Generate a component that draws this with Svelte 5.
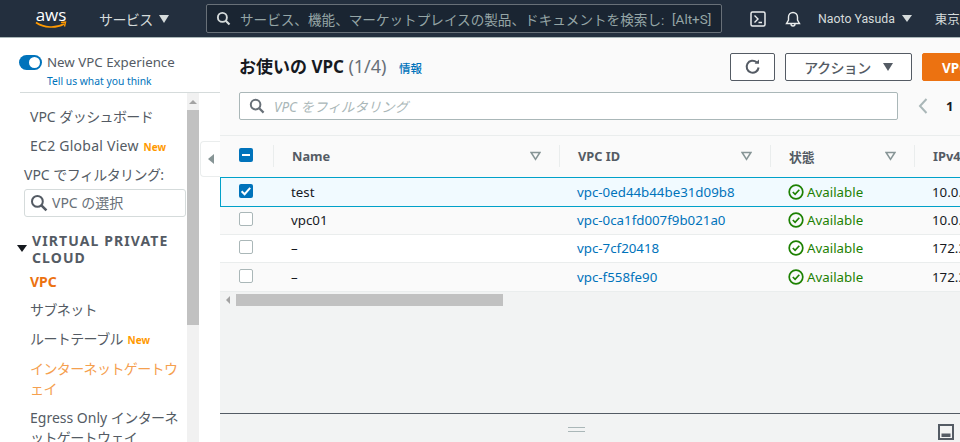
<script>
  const rows = [
    { name: "test", id: "vpc-0ed44b44be31d09b8", cidr: "10.0.0.0/16", selected: true },
    { name: "vpc01", id: "vpc-0ca1fd007f9b021a0", cidr: "10.0.0.0/16", shade: true },
    { name: "–", id: "vpc-7cf20418", cidr: "172.31.0.0/16" },
    { name: "–", id: "vpc-f558fe90", cidr: "172.31.0.0/16", shade: true }
  ];
  const columns = ["Name", "VPC ID", "状態", "IPv4 CIDR"];
</script>

<div class="app">
  <header class="topbar">
    <div class="logo">
      <span class="logo-text">aws</span>
      <svg class="smile" viewBox="0 0 32 9" width="32" height="9">
        <path d="M1 1.5C9 7 21 7.5 29 3" fill="none" stroke="#f90" stroke-width="1.6" />
        <path d="M26 1.5l4.5-.5-1 4.5" fill="none" stroke="#f90" stroke-width="1.4" />
      </svg>
    </div>
    <div class="services"><span class="ja">サービス</span><span class="caret light"></span></div>
    <div class="global-search">
      <svg viewBox="0 0 16 16" width="15" height="15">
        <circle cx="6.8" cy="6.8" r="4.8" fill="none" stroke="#d5dbdb" stroke-width="2" />
        <path d="M10.4 10.4l4 4" stroke="#d5dbdb" stroke-width="2.2" />
      </svg>
      <span class="search-text">サービス、機能、マーケットプレイスの製品、ドキュメントを検索し:</span>
      <span class="shortcut">[Alt+S]</span>
    </div>
    <svg class="cloudshell" viewBox="0 0 16 16" width="16" height="16">
      <rect x="1" y="1" width="14" height="14" rx="1.5" fill="none" stroke="#eaeded" stroke-width="1.5" />
      <path d="M4.5 4.5l3.5 3.5-3.5 3.5M8.5 11.5h3.5" fill="none" stroke="#eaeded" stroke-width="1.4" />
    </svg>
    <svg class="bell" viewBox="0 0 16 16" width="16" height="16">
      <path d="M1.5 12.5h13L12.5 9V6a4.5 4.5 0 0 0-9 0v3zM6 13a2 2 0 0 0 4 0" fill="none" stroke="#eaeded" stroke-width="1.4" />
    </svg>
    <div class="user">Naoto Yasuda<span class="caret light"></span></div>
    <div class="region">東京</div>
  </header>

  <div class="body">
    <aside class="side">
      <div class="experience">
        <div class="toggle-row">
          <span class="toggle"><span class="knob"></span></span>
          <span>New VPC Experience</span>
        </div>
        <a class="feedback">Tell us what you think</a>
      </div>

      <div class="side-lower">
        <nav class="nav">
          <div class="nav-item dash">VPC <span class="ja">ダッシュボード</span></div>
          <div class="nav-item en">EC2 Global View <span class="new">New</span></div>
          <div class="filter-label">VPC <span class="ja">でフィルタリング:</span></div>
          <div class="vpc-select">
            <svg viewBox="0 0 18 18" width="18" height="18">
              <circle cx="7.4" cy="7.4" r="5.4" fill="none" stroke="#545b64" stroke-width="2" />
              <path d="M11.4 11.4l5 5" stroke="#545b64" stroke-width="2.6" />
            </svg>
            <span>VPC の選択</span>
          </div>
          <div class="section">
            <span class="section-caret"></span>
            <span>VIRTUAL PRIVATE CLOUD</span>
          </div>
          <div class="nav-item current">VPC</div>
          <div class="nav-item"><span class="ja">サブネット</span></div>
          <div class="nav-item"><span class="ja">ルートテーブル</span> <span class="new">New</span></div>
          <div class="nav-item hover"><span class="ja">インターネットゲートウェイ</span></div>
          <div class="nav-item">Egress Only <span class="ja">インターネットゲートウェイ</span></div>
        </nav>

        <div class="vscroll">
          <span class="vscroll-up"></span>
          <span class="vscroll-thumb"></span>
        </div>

        <div class="collapse-col">
          <div class="collapse-tab"><span class="tab-arrow"></span></div>
        </div>
      </div>
    </aside>

    <main class="main">
      <section class="page-head">
        <div class="title-row">
          <h1>お使いの VPC <span class="count">(1/4)</span></h1>
          <a class="info">情報</a>
          <div class="actions">
            <button class="btn refresh" aria-label="更新">
              <svg viewBox="0 0 18 18" width="18" height="18">
                <path d="M14.6 9.5A6 6 0 1 1 12.6 4.2" fill="none" stroke="#545b64" stroke-width="2" />
                <path d="M15 1.4v4.4h-4.4z" fill="#545b64" />
              </svg>
            </button>
            <button class="btn action"><span class="ja">アクション</span><span class="caret"></span></button>
            <button class="btn primary">VPC を作成</button>
          </div>
        </div>
        <div class="filter-row">
          <div class="filter">
            <svg viewBox="0 0 16 16" width="16" height="16">
              <circle cx="6.6" cy="6.6" r="4.8" fill="none" stroke="#687078" stroke-width="2" />
              <path d="M10.2 10.2l4.4 4.4" stroke="#687078" stroke-width="2.2" />
            </svg>
            <span>VPC をフィルタリング</span>
          </div>
          <div class="pager">
            <svg viewBox="0 0 10 18" width="10" height="18">
              <path d="M8.5 2L2 9l6.5 7" fill="none" stroke="#aab7b8" stroke-width="2" />
            </svg>
            <span>1</span>
          </div>
        </div>
      </section>

      <div class="table">
        <div class="row head">
          <div class="cell check">
            <span class="box checked"><span class="dash-mark"></span></span>
          </div>
          {#each columns as col, i}
            <div class="cell th">
              <span>{col}</span>
              {#if i < 3}
                <svg viewBox="0 0 12 10" width="11" height="10">
                  <path d="M1.2 1.2h9.6L6 8.6z" fill="none" stroke="#879596" stroke-width="1.7" />
                </svg>
              {/if}
            </div>
          {/each}
        </div>
        {#each rows as row}
          <div class="row" class:selected={row.selected} class:shade={row.shade}>
            <div class="cell check">
              {#if row.selected}
                <span class="box checked">
                  <svg viewBox="0 0 14 14" width="14" height="14">
                    <path d="M2.6 7.2l3 3 5.6-6.4" fill="none" stroke="#fff" stroke-width="2" />
                  </svg>
                </span>
              {:else}
                <span class="box"></span>
              {/if}
            </div>
            <div class="cell">{row.name}</div>
            <div class="cell id">{row.id}</div>
            <div class="cell status">
              <svg viewBox="0 0 16 16" width="16" height="16">
                <circle cx="8" cy="8" r="6.8" fill="none" stroke="#1d8102" stroke-width="1.7" />
                <path d="M4.8 8l2.3 2.3 4.2-4.6" fill="none" stroke="#1d8102" stroke-width="1.7" />
              </svg>
              <span>Available</span>
            </div>
            <div class="cell">{row.cidr}</div>
          </div>
        {/each}
      </div>

      <div class="hscroll">
        <span class="hscroll-left"></span>
        <span class="hscroll-thumb"></span>
      </div>

      <div class="spacer"></div>

      <footer class="split">
        <span class="grip"></span>
        <svg class="split-icon" viewBox="0 0 16 16" width="16" height="16">
          <rect x="1" y="1" width="14" height="14" fill="none" stroke="#545b64" stroke-width="2" />
          <rect x="3.5" y="9.5" width="9" height="3.5" fill="#545b64" />
        </svg>
      </footer>
    </main>
  </div>
</div>

<style>
  :global(body) {
    margin: 0;
    overflow: hidden;
  }

  .app {
    height: 442px;
    display: flex;
    flex-direction: column;
    overflow: hidden;
    font-family: "Noto Sans", "Noto Sans CJK JP", sans-serif;
    font-size: 14px;
    color: #545b64;
  }

  /* katakana runs are a little tighter than the CJK font's full width */
  .ja {
    letter-spacing: -0.6px;
  }

  .topbar {
    height: 37px;
    flex: none;
    display: flex;
    align-items: center;
    background: #232f3e;
    border-bottom: 1px solid #aab7b8;
    font-family: Roboto, "Noto Sans CJK JP", sans-serif;
    color: #d5dbdb;
    white-space: nowrap;
    overflow: hidden;
  }

  .topbar > * {
    flex: none;
  }

  .logo {
    width: 32px;
    margin-left: 35px;
    display: flex;
    flex-direction: column;
    align-items: center;
    color: #fff;
  }

  .logo-text {
    font-family: "Open Sans", sans-serif;
    font-size: 17px;
    line-height: 15px;
  }

  .smile {
    display: block;
    margin-top: -1px;
  }

  .services {
    margin-left: 32px;
    font-size: 14px;
    display: flex;
    align-items: center;
    gap: 6px;
    width: 71px;
  }

  .caret {
    display: inline-block;
    width: 0;
    height: 0;
    border-left: 5.5px solid transparent;
    border-right: 5.5px solid transparent;
    border-top: 8px solid #545b64;
  }

  .caret.light {
    border-top-color: #d5dbdb;
  }

  .global-search {
    box-sizing: border-box;
    width: 516px;
    height: 29px;
    margin-left: 36px;
    border: 1px solid #687078;
    border-radius: 2px;
    background: #1a2532;
    display: flex;
    align-items: center;
    padding-left: 9px;
  }

  .search-text {
    margin-left: 9px;
    font-size: 13.6px;
    color: #95a5a6;
    width: 432px;
    overflow: hidden;
  }

  .shortcut {
    font-size: 13.5px;
    color: #95a5a6;
  }

  .cloudshell {
    margin-left: 28px;
  }

  .bell {
    margin-left: 19px;
  }

  .user {
    margin-left: 17px;
    font-size: 12.3px;
    display: flex;
    align-items: center;
    gap: 7px;
  }

  .user .caret {
    border-left-width: 5px;
    border-right-width: 5px;
    border-top-width: 7px;
  }

  .region {
    margin-left: 23px;
    font-size: 12.5px;
  }

  .body {
    flex: 1;
    min-height: 0;
    display: flex;
  }

  .side {
    width: 220px;
    flex: none;
    display: flex;
    flex-direction: column;
    background: #fff;
    min-height: 0;
  }

  .experience {
    height: 55px;
    flex: none;
    margin-left: 20px;
    box-sizing: border-box;
    border-bottom: 1px solid #d5dbdb;
    padding-top: 14px;
    font-size: 13.3px;
  }

  .toggle-row {
    display: flex;
    align-items: center;
    gap: 5px;
    height: 20px;
    margin-left: -1px;
  }

  .toggle {
    width: 23px;
    height: 15px;
    border-radius: 8px;
    background: #0073bb;
    position: relative;
    display: block;
    flex: none;
  }

  .knob {
    position: absolute;
    right: 2px;
    top: 2px;
    width: 11px;
    height: 11px;
    border-radius: 50%;
    background: #fff;
  }

  .feedback {
    display: block;
    margin-left: 27px;
    margin-top: 2px;
    font-size: 10.3px;
    line-height: 14px;
    color: #0073bb;
  }

  .side-lower {
    flex: 1;
    min-height: 0;
    display: flex;
  }

  .nav {
    width: 187px;
    flex: none;
    box-sizing: border-box;
    padding: 14px 0 0 30px;
    overflow: hidden;
    line-height: 20px;
  }

  .nav-item {
    margin-bottom: 9px;
    padding-right: 3px;
  }

  .nav-item.en {
    letter-spacing: 0.25px;
  }

  .new {
    font-size: 10px;
    font-weight: 700;
    letter-spacing: 0;
    color: #ff9900;
    margin-left: 1px;
  }

  .filter-label {
    margin-left: -6px;
    margin-top: -1px;
  }

  .vpc-select {
    width: 162px;
    height: 28px;
    box-sizing: border-box;
    margin: 4px 0 0 -6px;
    border: 1px solid #d5dbdb;
    border-radius: 3px;
    display: flex;
    align-items: center;
    gap: 4px;
    padding-left: 5px;
    color: #687078;
  }

  .section {
    margin: 15px 0 6px -13px;
    display: flex;
    font-weight: 700;
    font-size: 14px;
    line-height: 17px;
    letter-spacing: 1.1px;
    gap: 5px;
  }

  .section-caret {
    flex: none;
    width: 0;
    height: 0;
    margin-top: 13px;
    border-left: 5px solid transparent;
    border-right: 5px solid transparent;
    border-top: 7px solid #16191f;
  }

  .nav-item.current {
    color: #ec7211;
    font-weight: 700;
    margin-bottom: 8px;
  }

  .hover {
    color: #f5a04f;
  }

  .vscroll {
    width: 12px;
    flex: none;
    background: #f1f1f1;
    display: flex;
    flex-direction: column;
  }

  .vscroll-up {
    height: 17px;
    flex: none;
    display: flex;
    justify-content: center;
    align-items: center;
  }

  .vscroll-up::before {
    content: "";
    border-left: 4px solid transparent;
    border-right: 4px solid transparent;
    border-bottom: 4px solid #a3a3a3;
  }

  .vscroll-thumb {
    height: 215px;
    flex: none;
    background: #c1c1c1;
  }

  .collapse-col {
    width: 21px;
    flex: none;
    padding-top: 48px;
    background: #fff;
  }

  .collapse-tab {
    height: 36px;
    margin-left: 1px;
    box-sizing: border-box;
    border: 1px solid #eaeded;
    border-right: 0;
    border-radius: 4px 0 0 4px;
    display: flex;
    align-items: center;
    justify-content: center;
  }

  .tab-arrow {
    border-top: 5px solid transparent;
    border-bottom: 5px solid transparent;
    border-right: 6px solid #879596;
  }

  .main {
    flex: 1;
    min-width: 0;
    display: flex;
    flex-direction: column;
    background: #f2f3f3;
  }

  .page-head {
    height: 98px;
    flex: none;
    box-sizing: border-box;
    background: #fafafa;
    border-bottom: 1px solid #eaeded;
    padding: 15px 0 0 19px;
  }

  .title-row {
    display: flex;
    align-items: center;
    height: 28px;
    white-space: nowrap;
  }

  h1 {
    margin: -2px 0 0;
    font-size: 17px;
    font-weight: 700;
    color: #16191f;
    line-height: 28px;
    flex: none;
    width: 149px;
  }

  .count {
    font-weight: 400;
    font-size: 18px;
    color: #687078;
  }

  .info {
    margin-left: 11px;
    font-size: 11.5px;
    font-weight: 500;
    color: #0073bb;
    flex: none;
    width: 23px;
    position: relative;
    top: 1px;
  }

  .actions {
    display: flex;
    gap: 10px;
    flex: none;
    margin-left: 308px;
  }

  .btn {
    height: 28px;
    box-sizing: border-box;
    border: 1px solid #545b64;
    border-radius: 2px;
    background: #fff;
    font: inherit;
    font-size: 14px;
    color: #545b64;
    padding: 0;
    display: flex;
    align-items: center;
    justify-content: center;
    flex: none;
  }

  .refresh {
    width: 45px;
  }

  .action {
    width: 127px;
    gap: 12px;
    font-weight: 500;
  }

  .primary {
    width: 120px;
    background: #ec7211;
    border-color: #ec7211;
    color: #fff;
    font-size: 13.5px;
    font-weight: 700;
    justify-content: flex-start;
    padding-left: 19px;
  }

  .filter-row {
    display: flex;
    align-items: center;
    margin-top: 11px;
  }

  .filter {
    width: 659px;
    height: 28px;
    flex: none;
    box-sizing: border-box;
    background: #fff;
    border: 1px solid #aab7b8;
    border-radius: 2px;
    display: flex;
    align-items: center;
    gap: 9px;
    padding-left: 9px;
    font-style: italic;
    font-size: 13.5px;
    color: #aab7b8;
  }

  .pager {
    margin-left: 20px;
    display: flex;
    align-items: center;
    gap: 18px;
    font-size: 13px;
    font-weight: 700;
    color: #16191f;
  }

  .table {
    flex: none;
    width: 940px;
  }

  .row {
    display: grid;
    grid-template-columns: 53px 286px 211px 144px 246px;
    height: 28.6px;
    box-sizing: border-box;
    background: #fff;
    border-bottom: 1px solid #eaeded;
    align-items: center;
    white-space: nowrap;
    font-size: 13.3px;
    color: #16191f;
  }

  .row.shade {
    background: #fafafa;
  }

  .row.head {
    height: 42px;
    background: #fafafa;
    border-bottom: 0;
    padding-bottom: 2px;
  }

  .row.selected {
    grid-template-columns: 52px 286px 211px 144px 246px;
    background: #f1faff;
    border: 1px solid #00a1c9;
    margin-top: -1px;
    height: 30px;
    margin-bottom: -1px;
    padding-bottom: 1px;
    position: relative;
  }

  .cell {
    padding-left: 18px;
    display: flex;
    align-items: center;
  }

  .check {
    padding-left: 19px;
    padding-bottom: 2px;
  }

  .selected .cell:first-child {
    padding-left: 18px;
  }

  .th {
    height: 22px;
    font-weight: 700;
    font-size: 12.8px;
    color: #545b64;
    border-left: 1px solid #eaeded;
    justify-content: space-between;
    padding-right: 18px;
  }

  .box {
    width: 14px;
    height: 14px;
    display: flex;
    align-items: center;
    justify-content: center;
    outline: 1px solid #aab7b8;
    outline-offset: -1px;
    border-radius: 2px;
    background: #fff;
  }

  .box.checked {
    background: #0073bb;
    outline: 0;
  }

  .dash-mark {
    width: 8px;
    height: 2px;
    background: #fff;
  }

  .id {
    color: #0073bb;
  }

  .status {
    color: #1d8102;
    gap: 3px;
  }

  .hscroll {
    height: 15px;
    flex: none;
    display: flex;
    align-items: center;
    padding-top: 1px;
  }

  .hscroll-left {
    width: 16px;
    flex: none;
    display: flex;
    justify-content: center;
  }

  .hscroll-left::before {
    content: "";
    border-top: 4px solid transparent;
    border-bottom: 4px solid transparent;
    border-right: 4px solid #a3a3a3;
  }

  .hscroll-thumb {
    width: 267px;
    height: 12px;
    background: #c1c1c1;
  }

  .spacer {
    flex: 1;
  }

  .split {
    height: 29px;
    flex: none;
    box-sizing: border-box;
    border-top: 1px solid #545b64;
    display: flex;
    align-items: center;
    padding: 0 6px 0 348px;
    justify-content: space-between;
  }

  .grip {
    width: 17px;
    height: 5px;
    box-sizing: border-box;
    border-top: 1px solid #aab7b8;
    border-bottom: 1px solid #aab7b8;
    margin-top: 2px;
  }

  .split-icon {
    display: block;
    margin-top: 7px;
  }
</style>
